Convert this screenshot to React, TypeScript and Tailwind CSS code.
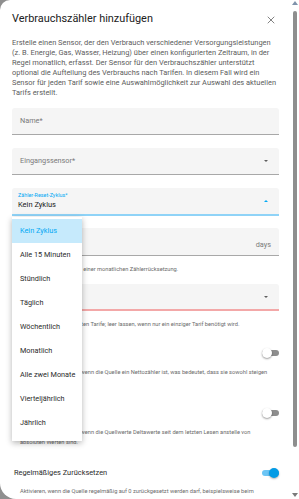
import { X } from "lucide-react";

const menuItems = [
  "Kein Zyklus",
  "Alle 15 Minuten",
  "Stündlich",
  "Täglich",
  "Wöchentlich",
  "Monatlich",
  "Alle zwei Monate",
  "Vierteljährlich",
  "Jährlich",
];

const Caret = ({ up = false }: { up?: boolean }) =>
  up ? (
    <div className="w-0 h-0 border-x-[2.5px] border-x-transparent border-b-[2.5px] border-b-[#03a9f4]" />
  ) : (
    <div className="w-0 h-0 border-x-[2.5px] border-x-transparent border-t-[2.5px] border-t-[#5f5f5f]" />
  );

const Toggle = ({ on = false }: { on?: boolean }) => (
  <div className="relative w-[17px] h-[10px] flex items-center">
    <div className={on ? "w-full h-[6px] rounded-full bg-[#6cc5f5]" : "w-full h-[6px] rounded-full bg-[#8d8d8d]"} />
    <div
      className={
        on
          ? "absolute right-0 top-0 w-[10px] h-[10px] rounded-full bg-[#039be5] shadow-[0_1px_2px_rgba(0,0,0,0.3)]"
          : "absolute left-0 top-0 w-[10px] h-[10px] rounded-full bg-white shadow-[0_1px_2px_rgba(0,0,0,0.4)]"
      }
    />
  </div>
);

const Helper = ({ children }: { children: React.ReactNode }) => (
  <p className="px-[8px] text-[5.7px] leading-[10px] text-[#6b6b6b]">{children}</p>
);

export default function App() {
  return (
    <div className="relative w-[299px] h-[499px] overflow-hidden bg-[#8f8f8f] font-['Roboto',sans-serif]">
      <div className="h-full flex bg-white rounded-tl-[10px] rounded-bl-[16px]">
        <div className="flex-1 px-[12px]">
          <div className="flex items-center justify-between pt-[11px]">
            <h2 className="text-[10.9px] leading-[14px] text-[#212121]">Verbrauchszähler hinzufügen</h2>
            <X size={12} strokeWidth={1.5} className="mt-[3px] mr-[2px] text-[#5a5a5a]" />
          </div>

          <p className="mt-[12px] text-[7.45px] leading-[10px] text-[#5c5c5c]">
            Erstelle einen Sensor, der den Verbrauch verschiedener Versorgungsleistungen (z. B. Energie, Gas, Wasser,
            Heizung) über einen konfigurierten Zeitraum, in der Regel monatlich, erfasst. Der Sensor für den
            Verbrauchszähler unterstützt optional die Aufteilung des Verbrauchs nach Tarifen. In diesem Fall wird ein
            Sensor für jeden Tarif sowie eine Auswahlmöglichkeit zur Auswahl des aktuellen Tarifs erstellt.
          </p>

          <div className="mt-[10px] h-[27px] flex items-center px-[8px] bg-[#f5f5f5] rounded-t-[3px] border-b border-[#a8a8a8]">
            <span className="text-[7.3px] text-[#7a7a7a]">Name*</span>
          </div>

          <div className="mt-[13px] h-[27px] flex items-center justify-between pl-[8px] pr-[11px] bg-[#f5f5f5] rounded-t-[3px] border-b border-[#a8a8a8]">
            <span className="text-[7.3px] text-[#7a7a7a]">Eingangssensor*</span>
            <Caret />
          </div>

          <div className="mt-[13px] h-[28px] flex items-center justify-between pl-[6px] pr-[11px] bg-[#f5f5f5] rounded-t-[3px] border-b-2 border-[#8fd3f7]">
            <div className="flex flex-col -mt-[1px]">
              <span className="text-[5.4px] leading-[6px] text-[#03a9f4]">Zähler-Reset-Zyklus*</span>
              <span className="mt-[2px] text-[7.5px] leading-[10px] text-[#212121]">Kein Zyklus</span>
            </div>
            <Caret up />
          </div>

          <div className="mt-[12px] h-[28px] flex items-end justify-between pl-[6px] pr-[8px] pb-[5px] bg-[#f5f5f5] rounded-t-[3px] border-b border-[#a8a8a8]">
            <span className="text-[7.5px] leading-[10px] text-[#212121]">0</span>
            <span className="text-[7.3px] leading-[10px] text-[#7a7a7a]">days</span>
          </div>
          <div className="mt-[8px]">
            <Helper>Verschiebung des Tages einer monatlichen Zählerrücksetzung.</Helper>
          </div>

          <div className="mt-[10px] h-[27px] flex items-center justify-between pl-[8px] pr-[11px] bg-[#f5f5f5] rounded-t-[3px] border-b-2 border-[#f3a8a8]">
            <span className="text-[7.3px] text-[#7a7a7a]">Unterstützte Tarife</span>
            <Caret />
          </div>
          <div className="mt-[8px]">
            <Helper>Eine Liste der unterstützten Tarife; leer lassen, wenn nur ein einziger Tarif benötigt wird.</Helper>
          </div>

          <div className="mt-[14px] h-[20px] flex items-center justify-between pl-[2px]">
            <span className="text-[7.4px] text-[#2a2a2a]">Nettoverbrauch</span>
            <Toggle />
          </div>
          <div className="mt-[4px]">
            <Helper>
              Diese Option aktivieren, wenn die Quelle ein Nettozähler ist, was bedeutet, dass sie sowohl steigen als
              auch fallen kann.
            </Helper>
          </div>

          <div className="mt-[16px] h-[20px] flex items-center justify-between pl-[2px]">
            <span className="text-[7.4px] text-[#2a2a2a]">Delta-Werte</span>
            <Toggle />
          </div>
          <div className="mt-[4px]">
            <Helper>
              Diese Option aktivieren, wenn die Quellwerte Deltawerte seit dem letzten Lesen anstelle von absoluten
              Werten sind.
            </Helper>
          </div>

          <div className="mt-[16px] h-[20px] flex items-center justify-between pl-[2px]">
            <span className="text-[7.4px] text-[#2a2a2a]">Regelmäßiges Zurücksetzen</span>
            <Toggle on />
          </div>
          <div className="mt-[3px]">
            <Helper>
              Aktivieren, wenn die Quelle regelmäßig auf 0 zurückgesetzt werden darf, beispielsweise beim Neustart des
              Geräts, ohne dass der Zähler dabei verloren geht.
            </Helper>
          </div>
        </div>

        <div className="w-[8px] flex flex-col items-center bg-white">
          <div className="mt-[1px] w-0 h-0 border-x-[3px] border-x-transparent border-b-[4px] border-b-[#7f93ab]" />
          <div className="mt-[6px] w-[4px] h-[436px] rounded-[2px] bg-[#8e8e8e]" />
          <div className="mt-auto mb-[2px] w-0 h-0 border-x-[3px] border-x-transparent border-t-[4px] border-t-[#7a7a7a]" />
        </div>
      </div>

      <div className="absolute left-[12px] top-[217px] w-[70px] pt-[2px] pb-[6px] bg-white shadow-[0_2px_6px_rgba(0,0,0,0.3)]">
        {menuItems.map((item, i) => (
          <div
            key={item}
            className={
              i === 0
                ? "h-[24px] flex items-center pl-[8px] bg-[#c6eafc] text-[7.3px] text-[#03a9f4]"
                : "h-[24px] flex items-center pl-[8px] text-[7.3px] text-[#2b2b2b]"
            }
          >
            {item}
          </div>
        ))}
      </div>
    </div>
  );
}
